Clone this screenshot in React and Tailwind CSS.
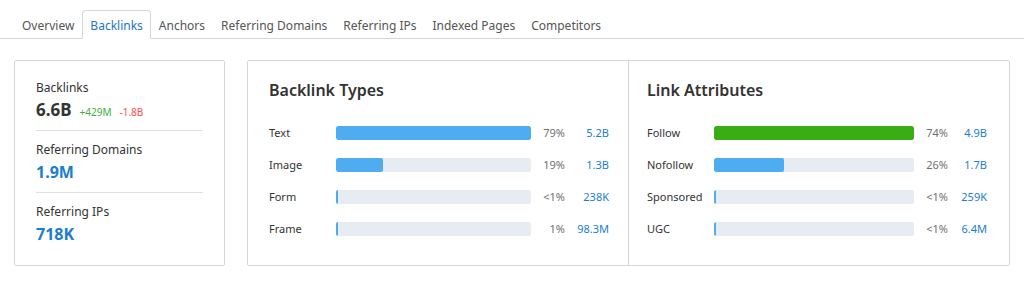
import React from "react";

const tabs = ["Overview", "Backlinks", "Anchors", "Referring Domains", "Referring IPs", "Indexed Pages", "Competitors"];

function Bar({ pct, color, width }) {
  return (
    <div className={`relative h-[14px] rounded-[2px] bg-[#e6ecf2] overflow-hidden ${width}`}>
      <div className={`h-full rounded-[2px] ${color}`} style={{ width: pct }} />
    </div>
  );
}

function Section({ title, rows, barW, valW, pl, pr, border }) {
  return (
    <div className={`flex-1 pt-[19px] ${pl} ${pr} ${border}`}>
      <div className="text-[16px] font-semibold text-[#333] leading-[20px] h-[20px]">{title}</div>
      <div className="mt-[26px] flex flex-col gap-[18px]">
        {rows.map((r) => (
          <div key={r.label} className="flex items-center h-[14px] text-[11px]">
            <div className="w-[67px] text-[#333]">{r.label}</div>
            <Bar pct={r.w} color={r.color || "bg-[#4eacf1]"} width={barW} />
            <div className="w-[34px] text-right text-[#6f6f6f]">{r.pct}</div>
            <div className={`${valW} text-right text-[#1a7ed0]`}>{r.val}</div>
          </div>
        ))}
      </div>
    </div>
  );
}

export default function App() {
  return (
    <div className="bg-white w-[1024px] h-[286px] text-[#333]" style={{ fontFamily: '"Noto Sans", "Open Sans", sans-serif' }}>
      <div className="pt-[10px] border-b border-[#d6d6d6] pl-[14px] flex">
        {tabs.map((t) => (
          <div
            key={t}
            className={
              t === "Backlinks"
                ? "h-[29px] -mb-px px-[7px] pt-[3px] flex items-center text-[12px] text-[#1b77c5] bg-white border border-[#d6d6d6] border-b-white rounded-t-[4px]"
                : "h-[28px] px-[8px] pt-[3px] flex items-center text-[12px] text-[#555]"
            }
          >
            {t}
          </div>
        ))}
      </div>
      <div className="flex px-[14px] mt-[21px] gap-[22px]">
        <div className="w-[211px] h-[206px] border border-[#d6d6d6] rounded-[2px] px-[21px] pt-[18px]">
          <div className="text-[12px] leading-[18px] text-[#333]">Backlinks</div>
          <div className="flex items-baseline gap-[8px] mt-[2px]">
            <span className="text-[17px] font-bold text-[#333] leading-[22px]">6.6B</span>
            <span className="text-[10px] text-[#45ad45]">+429M</span>
            <span className="text-[10px] text-[#ff4b4b]">-1.8B</span>
          </div>
          <div className="border-t border-[#e0e0e0] mt-[9px] pt-[10px]">
            <div className="text-[12px] leading-[18px] text-[#333]">Referring Domains</div>
            <div className="text-[16px] font-bold text-[#1a7ed0] leading-[22px] mt-[2px]">1.9M</div>
          </div>
          <div className="border-t border-[#e0e0e0] mt-[9px] pt-[10px]">
            <div className="text-[12px] leading-[18px] text-[#333]">Referring IPs</div>
            <div className="text-[16px] font-bold text-[#1a7ed0] leading-[22px] mt-[2px]">718K</div>
          </div>
        </div>
        <div className="w-[763px] h-[206px] border border-[#d6d6d6] rounded-[2px] flex">
          <Section
            title="Backlink Types"
            barW="w-[195px]"
            valW="w-[44px]"
            pl="pl-[21px]"
            pr="pr-[19px]"
            border="border-r border-[#d6d6d6]"
            rows={[
              { label: "Text", w: "100%", pct: "79%", val: "5.2B" },
              { label: "Image", w: "24%", pct: "19%", val: "1.3B" },
              { label: "Form", w: "2px", pct: "<1%", val: "238K" },
              { label: "Frame", w: "2px", pct: "1%", val: "98.3M" },
            ]}
          />
          <Section
            title="Link Attributes"
            barW="w-[200px]"
            valW="w-[39px]"
            pl="pl-[18px]"
            pr="pr-[22px]"
            border=""
            rows={[
              { label: "Follow", w: "100%", pct: "74%", val: "4.9B", color: "bg-[#3bad14]" },
              { label: "Nofollow", w: "35%", pct: "26%", val: "1.7B" },
              { label: "Sponsored", w: "2px", pct: "<1%", val: "259K" },
              { label: "UGC", w: "2px", pct: "<1%", val: "6.4M" },
            ]}
          />
        </div>
      </div>
    </div>
  );
}
